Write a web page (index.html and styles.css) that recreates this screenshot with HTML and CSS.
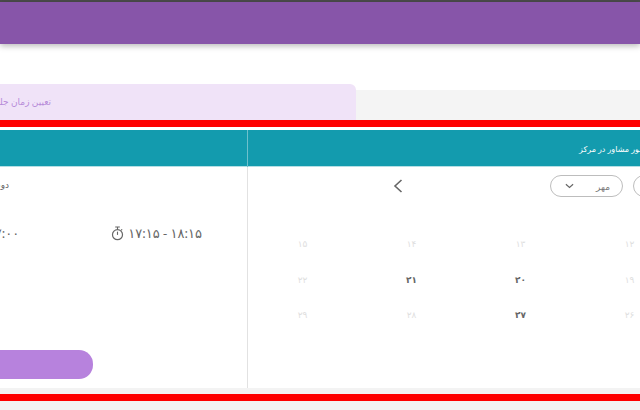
FILE: index.html
```html
<!DOCTYPE html>
<html lang="fa">
<head>
<meta charset="utf-8">
<title>تعیین زمان جلسه</title>
<link rel="stylesheet" href="styles.css">
</head>
<body>
<div class="page">
  <div class="topline"></div>
  <header class="header"></header>
  <div class="tabs">
    <div class="tab" dir="rtl">تعیین زمان جلسه مشاوره</div>
    <div class="tab-rest"></div>
  </div>
  <div class="redbar"></div>
  <main class="panel">
    <section class="side">
      <div class="head head-side" dir="rtl">انتخاب ساعت</div>
      <div class="side-body">
        <div class="day" dir="rtl">دوشنبه ۲۱ مهر</div>
        <div class="slots" dir="ltr">
          <span class="slot">
            <span class="time">۱۶:۰۰ - ۱۷:۰۰</span>
          </span>
          <span class="slot">
            <svg class="timer" viewBox="0 0 14 16" width="13" height="15"><path d="M4.500 1h5M7 1v2.500M11 4.500l1-1" fill="none" stroke="#666" stroke-width="1.200"/><circle cx="7" cy="9.300" r="5.400" fill="none" stroke="#666" stroke-width="1.300"/><path d="M7 6v3.500" fill="none" stroke="#666" stroke-width="1.200"/></svg>
            <span class="time">۱۷:۱۵ - ۱۸:۱۵</span>
          </span>
        </div>
        <button class="submit" type="button"></button>
      </div>
    </section>
    <section class="cal">
      <div class="head head-cal"><span dir="rtl">انتخاب حضور مشاور در مرکز</span></div>
      <div class="controls">
        <svg class="arrow" viewBox="0 0 10 14" width="10" height="14"><path d="M8.500 1L2 7l6.500 6" fill="none" stroke="#666" stroke-width="1.600"/></svg>
        <div class="pill">
          <svg class="caret" viewBox="0 0 10 6" width="9" height="6"><path d="M1 1l4 3.500L9 1" fill="none" stroke="#666" stroke-width="1.300"/></svg>
          <span class="pill-text">مهر</span>
        </div>
        <div class="pill pill-year"></div>
      </div>
      <div class="grid">
        <span class="date off">۱۵</span><span class="date off">۱۴</span><span class="date off">۱۳</span><span class="date off">۱۲</span>
        <span class="date off">۲۲</span><span class="date on">۲۱</span><span class="date on">۲۰</span><span class="date off">۱۹</span>
        <span class="date off">۲۹</span><span class="date off">۲۸</span><span class="date on">۲۷</span><span class="date off">۲۶</span>
      </div>
    </section>
  </main>
  <div class="band"></div>
  <div class="redbar redbar-low"></div>
  <div class="band-end"></div>
</div>
</body>
</html>
```

FILE: styles.css
```css
html, body {
  margin: 0;
  padding: 0;
  background: #fff;
}
.page {
  width: 640px;
  height: 410px;
  overflow: hidden;
  display: flex;
  flex-direction: column;
  font-family: "Noto Sans", "DejaVu Sans", "Liberation Sans", sans-serif;
}
.topline {
  height: 2px;
  background: #4b4b4b;
  flex: none;
}
.header {
  height: 42px;
  background: #8755a9;
  box-shadow: 0 2px 6px rgba(0, 0, 0, 0.28);
  flex: none;
}
.tabs {
  margin-top: 40px;
  height: 36px;
  display: flex;
  flex: none;
}
.tab {
  width: 356px;
  flex: none;
  box-sizing: border-box;
  padding-right: 305px;
  background: #f0e3f8;
  border-top-right-radius: 6px;
  color: #b78bd8;
  font-size: 9px;
  line-height: 36px;
  white-space: nowrap;
  overflow: hidden;
}
.tab-rest {
  flex: 1;
  margin-top: 6px;
  background: #f4f4f4;
}
.redbar {
  height: 7px;
  background: #fe0000;
  flex: none;
}
.panel {
  margin-top: 3px;
  height: 258px;
  display: flex;
  flex: none;
}
.side {
  width: 247px;
  flex: none;
  border-right: 1px solid #e2e2e2;
  display: flex;
  flex-direction: column;
}
.cal {
  flex: 1;
  min-width: 0;
  display: flex;
  flex-direction: column;
}
.head {
  height: 37px;
  box-sizing: border-box;
  background: #139bae;
  border-bottom: 1px solid #b4dfe5;
  flex: none;
  color: #fff;
  font-size: 8px;
  line-height: 37px;
  white-space: nowrap;
  overflow: hidden;
}
.head-side {
  box-shadow: 1px 0 0 #6fc0cc;
  padding-right: 247px;
}
.head-cal {
  padding-left: 331px;
}
.side-body {
  flex: 1;
  display: flex;
  flex-direction: column;
  min-height: 0;
}
.day {
  width: 9px;
  margin-top: 12px;
  height: 12px;
  font-size: 9px;
  line-height: 12px;
  color: #666;
  white-space: nowrap;
  overflow: hidden;
}
.slots {
  margin-top: 33px;
  height: 18px;
  display: flex;
  justify-content: flex-end;
  gap: 92px;
  padding-right: 45px;
  overflow: hidden;
}
.slot {
  display: flex;
  align-items: center;
  gap: 4px;
  flex: none;
  white-space: nowrap;
}
.timer {
  flex: none;
}
.time {
  font-size: 13px;
  line-height: 18px;
  color: #666;
}
.submit {
  display: block;
  margin-top: 108px;
  margin-left: -30px;
  width: 123px;
  height: 29px;
  border: 0;
  border-radius: 14px;
  background: #b782dd;
}
.controls {
  height: 22px;
  margin-top: 8px;
  display: flex;
  align-items: center;
  flex: none;
  overflow: hidden;
}
.arrow {
  margin-left: 145px;
  flex: none;
}
.pill {
  width: 73px;
  height: 22px;
  box-sizing: border-box;
  border: 1px solid #bdbdbd;
  border-radius: 11px;
  margin-left: 147px;
  flex: none;
  display: flex;
  align-items: center;
  justify-content: space-between;
  padding: 0 12px 0 14px;
}
.pill-year {
  margin-left: 10px;
}
.pill-text {
  font-size: 9px;
  color: #777;
}
.grid {
  margin-top: 41px;
  display: grid;
  grid-template-columns: repeat(4, 109px);
  grid-auto-rows: 35.5px;
  overflow: hidden;
}
.date {
  text-align: center;
  font-size: 9px;
  line-height: 12px;
}
.off {
  color: #e0e0e0;
}
.on {
  color: #666;
  font-weight: 700;
}
.band {
  height: 6px;
  background: #f3f3f3;
  flex: none;
}
.band-end {
  flex: 1;
  background: #f3f3f3;
}
```
